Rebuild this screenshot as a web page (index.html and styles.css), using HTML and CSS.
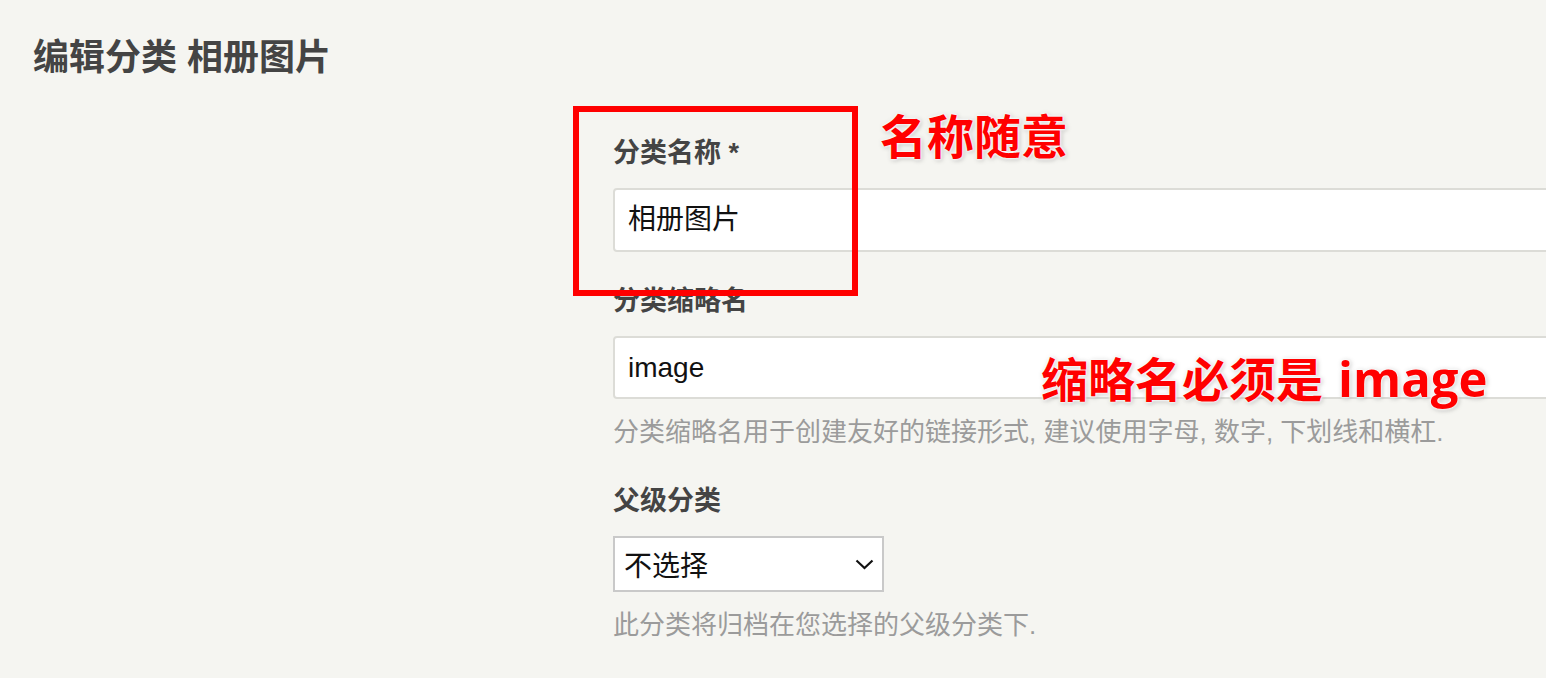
FILE: index.html
```html
<!DOCTYPE html>
<html lang="zh-CN">
<head>
<meta charset="utf-8">
<title>编辑分类 相册图片</title>
<link rel="stylesheet" href="styles.css">
</head>
<body>
<div class="page">
  <h1 class="title">编辑分类 相册图片</h1>
  <form class="form">
    <div class="field field-name">
      <label class="label">分类名称 *</label>
      <div class="input">相册图片</div>
    </div>
    <div class="field field-slug">
      <label class="label">分类缩略名</label>
      <div class="input">image</div>
      <p class="help">分类缩略名用于创建友好的链接形式, 建议使用字母, 数字, 下划线和横杠.</p>
    </div>
    <div class="field">
      <label class="label">父级分类</label>
      <div class="select">
        <span>不选择</span>
        <svg class="chevron" width="19" height="11" viewBox="0 0 19 11"><polyline points="1.5,1.5 9.5,9 17.5,1.5" fill="none" stroke="#111" stroke-width="2.2"/></svg>
      </div>
      <p class="help">此分类将归档在您选择的父级分类下.</p>
    </div>
  </form>
  <div class="mark-box"></div>
  <div class="note note-name">名称随意</div>
  <div class="note note-slug">缩略名必须是 <span class="latin">image</span></div>
</div>
</body>
</html>
```

FILE: styles.css
```css
html, body {
  margin: 0;
  padding: 0;
  background: #f5f5f1;
  overflow: hidden;
}
body {
  font-family: "Liberation Sans", "Noto Sans CJK SC", sans-serif;
  width: 1546px;
  height: 678px;
}
.page {
  position: relative;
  height: 678px;
  overflow: hidden;
}
.title {
  margin: 0;
  padding: 36px 0 0 33px;
  font-size: 36px;
  line-height: 44px;
  font-weight: bold;
  color: #444;
}
.form {
  margin: 55px 0 0 613px;
  width: 1100px;
}
.field {
  margin-bottom: 33px;
}
.field-name {
  margin-bottom: 31px;
}
.label {
  display: block;
  font-size: 27px;
  line-height: 36px;
  font-weight: bold;
  color: #444;
  margin-bottom: 17px;
}
.input {
  box-sizing: border-box;
  height: 64px;
  background: #fff;
  border: 2px solid #dcdcd7;
  border-radius: 4px;
  padding: 0 13px;
  font-size: 28px;
  line-height: 60px;
  color: #111;
}
.field-slug .input {
  height: 63px;
  line-height: 59px;
}
.help {
  margin: 15px 0 0;
  font-size: 26px;
  line-height: 36px;
  color: #9b9b9b;
}
.select {
  box-sizing: border-box;
  width: 271px;
  height: 56px;
  background: #fff;
  border: 2px solid #c9c9c9;
  padding: 0 8px 0 9px;
  display: flex;
  align-items: center;
  justify-content: space-between;
  font-size: 28px;
  color: #111;
}
.mark-box {
  position: absolute;
  left: 573px;
  top: 106px;
  width: 273px;
  height: 178px;
  border: 6px solid #ff0000;
}
.note {
  position: absolute;
  font-size: 47px;
  line-height: 56px;
  font-weight: bold;
  color: #ff0000;
  white-space: nowrap;
  text-shadow: 0 0 2px #fff, 0 0 3px #fff, 0 0 4px #fff, 1px 1px 5px rgba(0,0,0,0.35);
}
.note .latin {
  font-family: "Open Sans", "Liberation Sans", sans-serif;
  font-size: 49px;
  margin-left: 2px;
}
.note-name {
  left: 880px;
  top: 110px;
}
.note-slug {
  left: 1041px;
  top: 350px;
}
```
